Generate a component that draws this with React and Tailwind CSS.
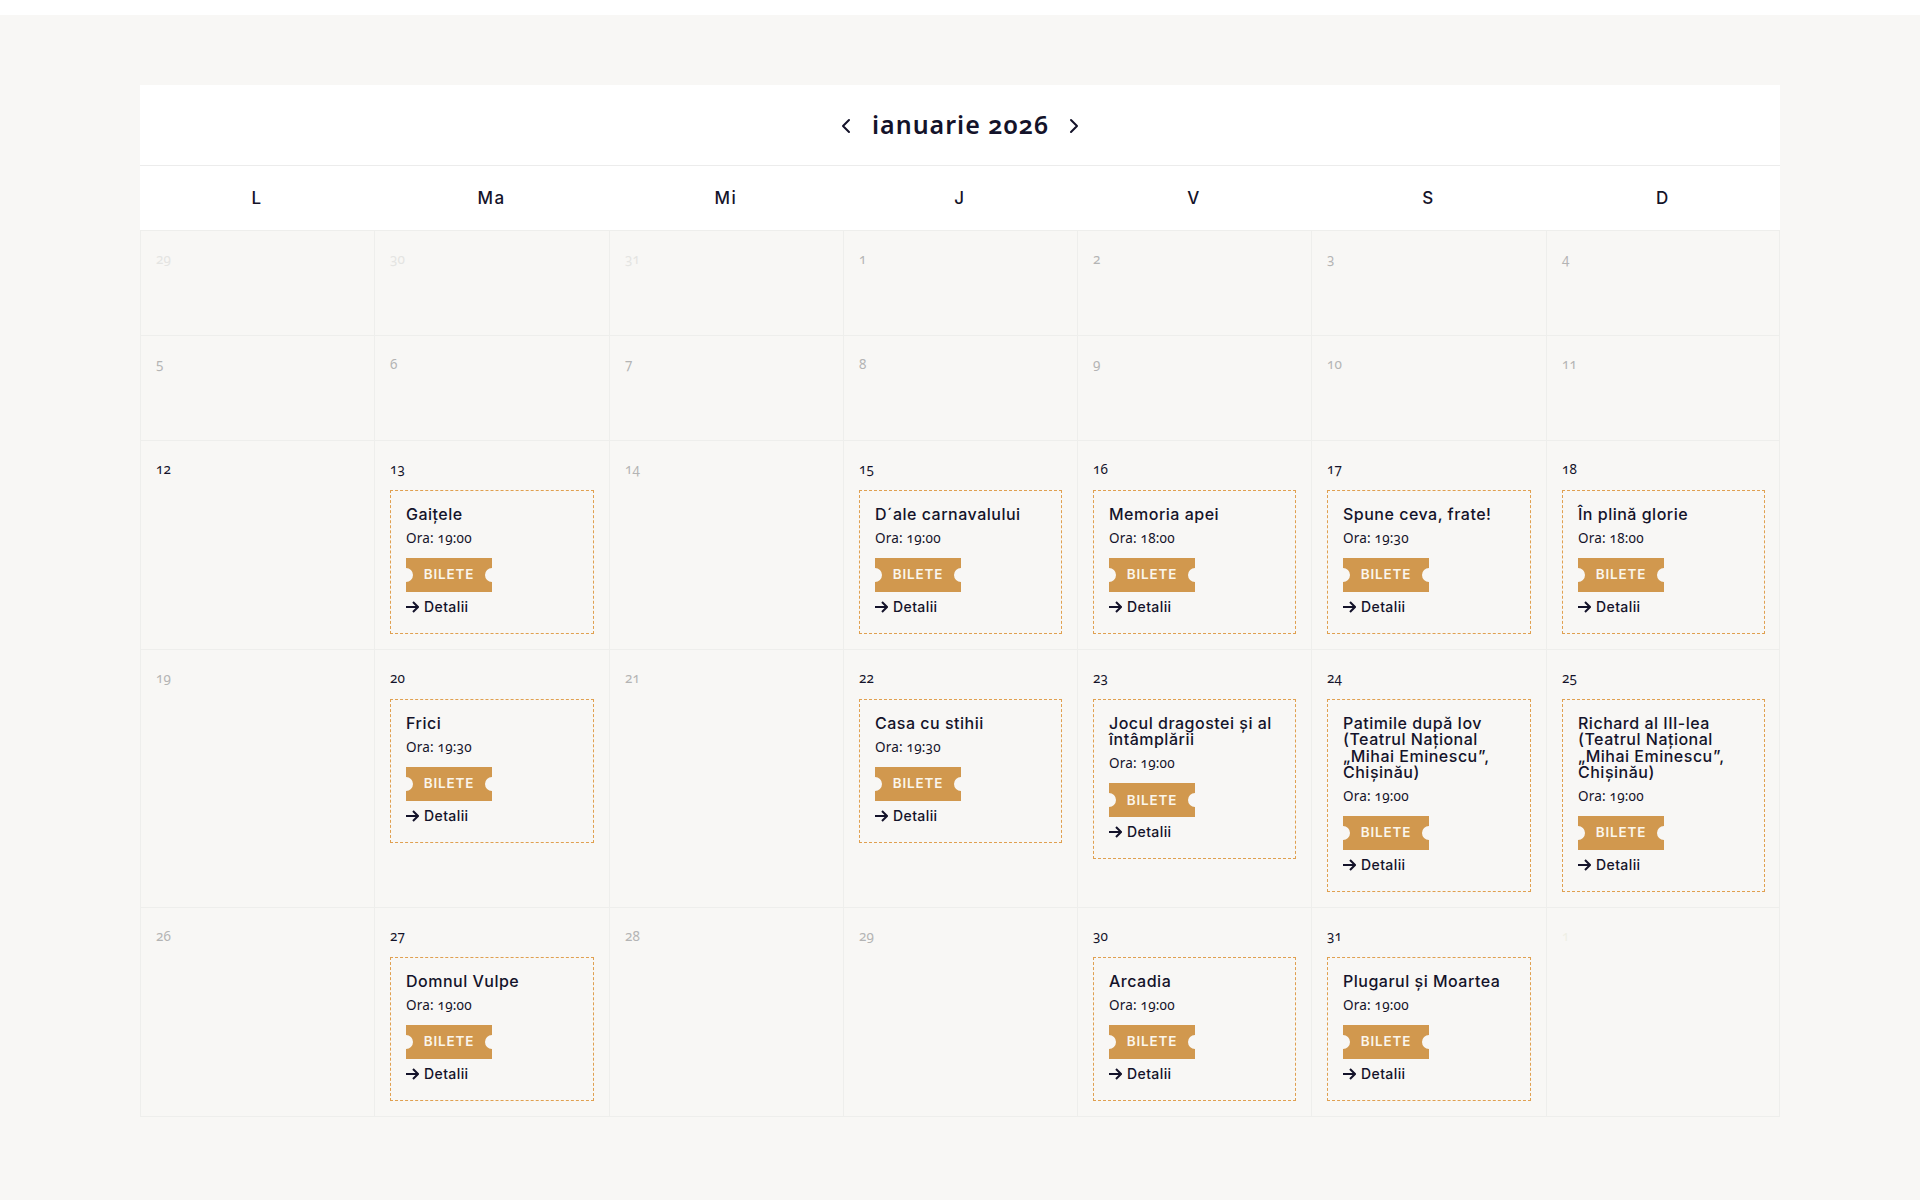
import { ChevronLeft, ChevronRight } from 'lucide-react';

const DAYS = ['L', 'Ma', 'Mi', 'J', 'V', 'S', 'D'];

const dark = 'text-[#14132a]';
const grey = 'text-[#b4b4b4]';
const faint = 'text-[#e4e4e2]';

const CELLS = [
    { day: 29, tone: faint }, { day: 30, tone: faint }, { day: 31, tone: faint },
    { day: 1, tone: grey }, { day: 2, tone: grey }, { day: 3, tone: grey }, { day: 4, tone: grey },
    { day: 5, tone: grey }, { day: 6, tone: grey }, { day: 7, tone: grey }, { day: 8, tone: grey },
    { day: 9, tone: grey }, { day: 10, tone: grey }, { day: 11, tone: grey },
    { day: 12, tone: dark },
    { day: 13, tone: dark, title: 'Gaițele', time: '19:00' },
    { day: 14, tone: grey },
    { day: 15, tone: dark, title: 'D´ale carnavalului', time: '19:00' },
    { day: 16, tone: dark, title: 'Memoria apei', time: '18:00' },
    { day: 17, tone: dark, title: 'Spune ceva, frate!', time: '19:30' },
    { day: 18, tone: dark, title: 'În plină glorie', time: '18:00' },
    { day: 19, tone: grey },
    { day: 20, tone: dark, title: 'Frici', time: '19:30' },
    { day: 21, tone: grey },
    { day: 22, tone: dark, title: 'Casa cu stihii', time: '19:30' },
    { day: 23, tone: dark, title: 'Jocul dragostei și al întâmplării', time: '19:00' },
    { day: 24, tone: dark, title: 'Patimile după Iov (Teatrul Național „Mihai Eminescu”, Chișinău)', time: '19:00' },
    { day: 25, tone: dark, title: 'Richard al III-lea (Teatrul Național „Mihai Eminescu”, Chișinău)', time: '19:00' },
    { day: 26, tone: grey },
    { day: 27, tone: dark, title: 'Domnul Vulpe', time: '19:00' },
    { day: 28, tone: grey },
    { day: 29, tone: grey },
    { day: 30, tone: dark, title: 'Arcadia', time: '19:00' },
    { day: 31, tone: dark, title: 'Plugarul și Moartea', time: '19:00' },
    { day: 1, tone: 'text-[#efefe6]' },
];

const TicketButton = () => (
    <a className="relative flex h-[34px] w-[86px] items-center justify-center text-[13.5px] leading-none font-semibold tracking-[0.8px] text-[#fbf6ec]">
        <svg className="absolute inset-0" width="86" height="34" viewBox="0 0 86 34" aria-hidden="true">
            <path
                d="M0 0H86V10A7 7 0 0 0 86 24V34H0V24A7 7 0 0 0 0 10Z"
                fill="#d1984e"
            />
        </svg>
        <span className="relative">BILETE</span>
    </a>
);

const DetailArrow = () => (
    <svg width="13" height="12" viewBox="0 0 13 12" fill="none" stroke="currentColor" strokeWidth="2" aria-hidden="true">
        <path d="M0 6H12M7 1L12 6L7 11" />
    </svg>
);

const EventCard = ({ title, time }) => (
    <div className="mt-[11px] border border-dashed border-[#e0a050] px-[15px] pt-[15px] pb-[18px]">
        <h3 className="text-[16px] leading-[16.33px] font-medium tracking-[0.5px]">{title}</h3>
        <p className="mt-[7.67px] font-['Noto_Sans'] text-[13.5px] leading-4 tracking-[0.2px] oldstyle-nums">Ora: {time}</p>
        <div className="mt-[12px]">
            <TicketButton />
        </div>
        <a className="mt-[7px] flex h-4 items-center gap-[5px] text-[14px] leading-4 font-medium tracking-[0.4px]">
            <DetailArrow />
            Detalii
        </a>
    </div>
);

const DayCell = ({ day, tone, title, time }) => (
    <div className="min-h-[105px] border-t border-l border-[#eeeeec] px-[15px] pt-[19px] pb-[15px]">
        <span className={`block h-[19px] font-['Noto_Sans'] text-[13.5px] leading-[19px] oldstyle-nums ${tone}`}>{day}</span>
        {title && <EventCard title={title} time={time} />}
    </div>
);

export default function App() {
    return (
        <div className="min-h-[1200px] bg-[#f8f7f5] font-['Inter','Liberation_Sans',sans-serif] text-[#14132a]">
            <div className="h-[15px] bg-white" />
            <div className="mx-[140px] mt-[70px]">
                <header className="flex h-[81px] items-center justify-center gap-[14px] border-b border-[#ececec] bg-white">
                    <ChevronLeft size={24} strokeWidth={2} className="mt-[2px]" />
                    <h2 className="w-[176px] text-center font-['Noto_Sans'] text-[25px] font-semibold whitespace-nowrap tracking-[1px] oldstyle-nums">ianuarie 2026</h2>
                    <ChevronRight size={24} strokeWidth={2} className="mt-[2px]" />
                </header>
                <div className="grid h-[64px] grid-cols-[234px_235px_234px_234px_234px_235px_234px] items-center bg-white pt-[2px]">
                    {DAYS.map((name) => (
                        <div key={name} className="text-center text-[17px] font-medium tracking-[1.5px]">{name}</div>
                    ))}
                </div>
                <div className="grid grid-cols-[234px_235px_234px_234px_234px_235px_234px] border-r border-b border-[#eeeeec]">
                    {CELLS.map((cell, i) => (
                        <DayCell key={i} {...cell} />
                    ))}
                </div>
            </div>
        </div>
    );
}
